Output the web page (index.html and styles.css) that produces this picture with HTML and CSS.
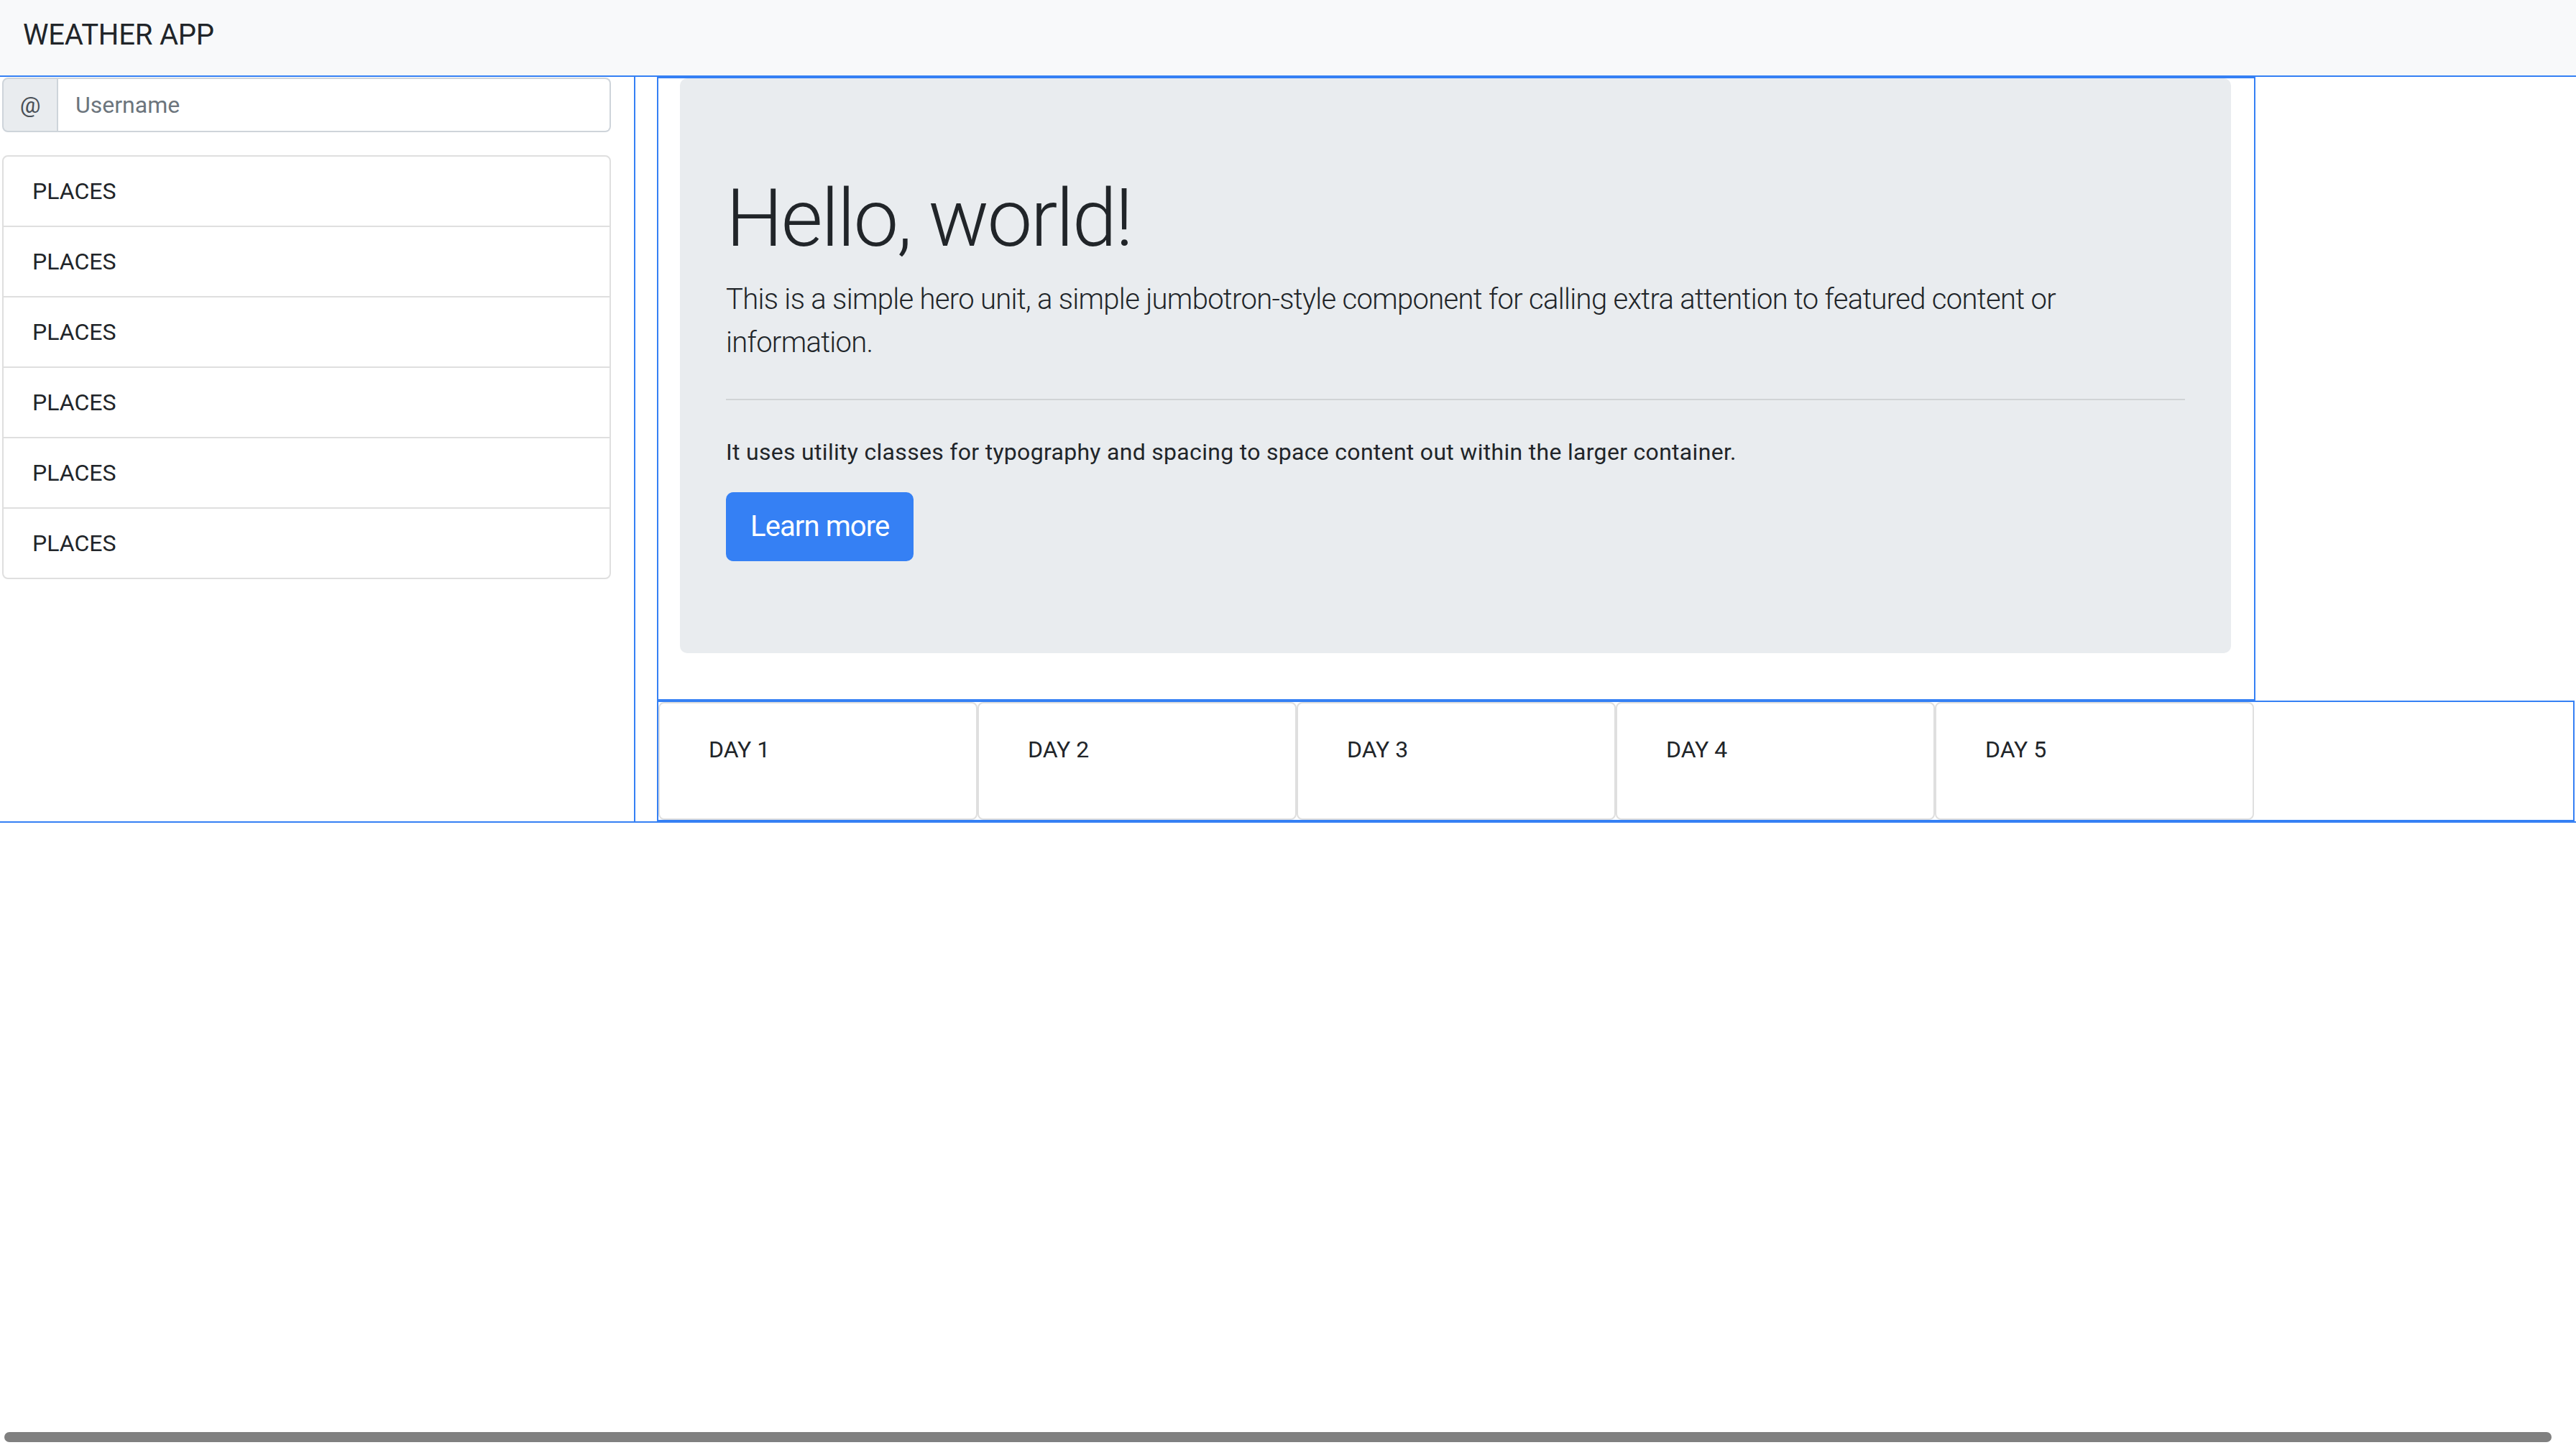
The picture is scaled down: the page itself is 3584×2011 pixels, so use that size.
FILE: index.html
```html
<!DOCTYPE html>
<html lang="en">
<head>
<meta charset="utf-8">
<title>Weather App</title>
<link rel="stylesheet" href="styles.css">
</head>
<body>
<nav class="navbar"><span class="brand">WEATHER APP</span></nav>
<div class="main">
  <aside class="sidebar">
    <div class="input-group">
      <span class="prepend">@</span>
      <input class="field" type="text" placeholder="Username">
    </div>
    <ul class="places">
      <li class="place">PLACES</li>
      <li class="place">PLACES</li>
      <li class="place">PLACES</li>
      <li class="place">PLACES</li>
      <li class="place">PLACES</li>
      <li class="place">PLACES</li>
    </ul>
  </aside>
  <section class="content">
    <div class="hero-box">
      <div class="jumbotron">
        <h1 class="display">Hello, world!</h1>
        <p class="lead">This is a simple hero unit, a simple jumbotron-style component for calling extra attention to featured content or information.</p>
        <hr class="divider">
        <p class="note">It uses utility classes for typography and spacing to space content out within the larger container.</p>
        <a class="btn" href="#">Learn more</a>
      </div>
    </div>
    <div class="days">
      <div class="day"><p>DAY 1</p></div>
      <div class="day"><p>DAY 2</p></div>
      <div class="day"><p>DAY 3</p></div>
      <div class="day"><p>DAY 4</p></div>
      <div class="day"><p>DAY 5</p></div>
    </div>
  </section>
</div>
<div class="scrollbar"></div>
</body>
</html>
```
FILE: styles.css
```css
* { box-sizing: border-box; }
html, body { margin: 0; padding: 0; }
body {
  font-family: Roboto, Inter, "Noto Sans", "Liberation Sans", sans-serif;
  color: #212529;
  background: #fff;
  font-size: 32px;
  line-height: 1.5;
  width: 3584px;
  height: 2011px;
  overflow: hidden;
}
.navbar {
  background: #f8f9fa;
  height: 105px;
  padding: 19px 32px 26px;
}
.brand { display: block; font-size: 40px; line-height: 60px; letter-spacing: -0.2px; }

.main {
  display: flex;
  border-top: 2px solid #3580f4;
  border-bottom: 2px solid #3580f4;
  padding-right: 2px;
}
.sidebar {
  width: 884px;
  flex: none;
  margin-right: 30px;
  border-right: 2px solid #3580f4;
  padding: 1px 32px 0 3px;
}
.input-group { display: flex; height: 76px; margin-bottom: 32px; }
.prepend {
  width: 78px;
  flex: none;
  background: #e9ecef;
  border: 2px solid #ced4da;
  border-radius: 8px 0 0 8px;
  display: flex;
  align-items: center;
  justify-content: center;
  color: #495057;
  font-size: 32px;
}
.field {
  flex: 1;
  min-width: 0;
  border: 2px solid #ced4da;
  border-left: none;
  border-radius: 0 8px 8px 0;
  padding: 0 24px;
  font-family: inherit;
  font-size: 32px;
  color: #495057;
  background: #fff;
  outline: none;
}
.field::placeholder { color: #6c757d; }
.places {
  list-style: none;
  margin: 0;
  padding: 0;
  border: 2px solid #dfdfdf;
  border-radius: 8px;
}
.place {
  height: 98px;
  padding: 0 40px;
  display: flex;
  align-items: center;
  border-top: 2px solid #dfdfdf;
}
.place:first-child { border-top: none; height: 96px; }

.content { flex: 1; border-left: 2px solid #3580f4; }
.hero-box {
  width: 2222px;
  border-top: 2px solid #3580f4;
  border-right: 2px solid #3580f4;
  border-bottom: 2px solid #3580f4;
  padding: 0 32px 64px 30px;
}
.jumbotron {
  background: #e9ecef;
  border-radius: 10px;
  padding: 128px 64px;
}
.display {
  font-size: 112px;
  font-weight: 300;
  line-height: 1.2;
  margin: 0 0 16px;
  letter-spacing: -2.5px;
}
.lead { font-size: 40px; font-weight: 300; line-height: 60px; margin: 0 0 32px; letter-spacing: -0.7px; }
.divider { margin: 48px 0; border: 0; border-top: 2px solid rgba(0,0,0,0.1); height: 0; }
.note { font-size: 32px; line-height: 48px; margin: 0 0 32px; letter-spacing: 0.3px; }
.btn {
  display: inline-block;
  background: #3580f4;
  border: 2px solid #3580f4;
  color: #fff;
  font-size: 40px;
  line-height: 60px;
  padding: 16px 32px;
  border-radius: 10px;
  text-decoration: none;
  letter-spacing: -0.9px;
}
.days {
  display: grid;
  grid-template-columns: repeat(6, 444px);
  border: 2px solid #3580f4;
  border-left: none;
}
.day {
  border: 2px solid #dfdfdf;
  border-radius: 8px;
  padding: 40px 68px 0;
  height: 164px;
}
.day p { margin: 0; font-size: 32px; line-height: 48px; }

.scrollbar {
  position: fixed;
  left: 6px;
  bottom: 4px;
  width: 3544px;
  height: 14px;
  background: #808080;
  border-radius: 7px;
}
```
